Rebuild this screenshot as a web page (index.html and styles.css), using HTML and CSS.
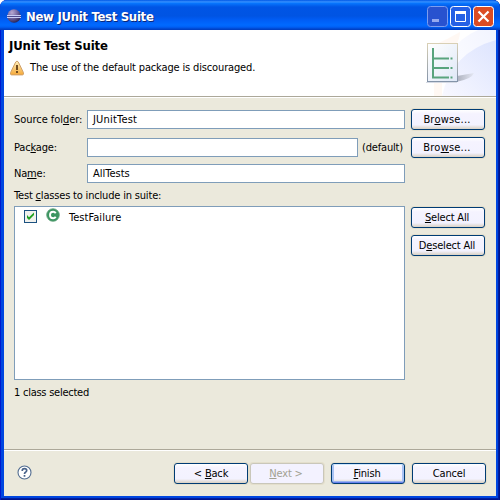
FILE: index.html
```html
<!DOCTYPE html>
<html lang="en">
<head>
<meta charset="utf-8">
<title>New JUnit Test Suite</title>
<link rel="stylesheet" href="styles.css">
</head>
<body>
<div class="window">
  <div class="titlebar">
    <svg class="app-icon" width="16" height="16" viewBox="0 0 16 16">
      <defs><radialGradient id="orb" cx=".35" cy=".25" r=".8"><stop offset="0" stop-color="#b9a9d2"/><stop offset=".5" stop-color="#7568a3"/><stop offset="1" stop-color="#252052"/></radialGradient></defs>
      <circle cx="8" cy="8" r="6.7" fill="url(#orb)"/>
      <path d="M1 7.500h14M1 9.500h14" stroke="#c9cdf5"/>
      <path d="M2 8.500h12" stroke="#51498e"/>
    </svg>
    <span class="title">New JUnit Test Suite</span>
    <div class="controls">
      <svg width="21" height="21" viewBox="0 0 21 21"><rect class="ctl dim" x=".5" y=".5" width="20" height="20" rx="3"/><path d="M5 13h7v3H5z" fill="#95a9ef"/></svg>
      <svg width="21" height="21" viewBox="0 0 21 21"><rect class="ctl" x=".5" y=".5" width="20" height="20" rx="3"/><path d="M5.5 5.5h10v10h-10z" fill="none" stroke="#fff"/><path d="M5 6.5h11" stroke="#fff" stroke-width="3"/></svg>
      <svg width="21" height="21" viewBox="0 0 21 21"><rect class="ctl close" x=".5" y=".5" width="20" height="20" rx="3"/><path d="M5.5 5.5l10 10M15.5 5.5l-10 10" stroke="#fff" stroke-width="2.2"/></svg>
    </div>
  </div>
  <div class="client">
    <div class="banner">
      <div class="message">
        <h1>JUnit Test Suite</h1>
        <div class="warning">
          <svg width="16" height="16" viewBox="0 0 16 16">
            <defs><linearGradient id="amber" x2="0" y2="1"><stop offset="0" stop-color="#fff0bd"/><stop offset="1" stop-color="#f5a938"/></linearGradient></defs>
            <path d="M8 1.2Q9 1.2 9.8 3L14.4 12.5Q15 14.9 13.5 14.9H2.5Q1 14.9 1.6 12.5L6.2 3Q7 1.2 8 1.2Z" fill="url(#amber)" stroke="#cf9f67"/>
            <path d="M8 5v5M8 11v2" stroke="#704b20" stroke-width="2"/>
          </svg>
          <span class="warn-text">The use of the default package is discouraged.</span>
        </div>
      </div>
      <svg class="art" width="96" height="66" viewBox="0 0 96 66">
        <defs>
          <linearGradient id="sky" x1="1" y1=".1" x2="0" y2=".7"><stop offset="0" stop-color="#f2f4ff"/><stop offset="1" stop-color="#fff"/></linearGradient>
          <linearGradient id="sky2" x1="1" y1="0" x2="0" y2="1"><stop offset="0" stop-color="#dde4fe"/><stop offset="1" stop-color="#f8f8ff"/></linearGradient>
          <linearGradient id="paper" x2="1" y2="1"><stop offset="0" stop-color="#fff"/><stop offset="1" stop-color="#dfe8f7"/></linearGradient>
          <linearGradient id="shade"><stop offset="0" stop-color="#aaaebb"/><stop offset="1" stop-color="#e5e8f4"/></linearGradient>
          <linearGradient id="edge" x2="0" y2="1"><stop offset="0" stop-color="#d9d0b5"/><stop offset="1" stop-color="#8494a9"/></linearGradient>
        </defs>
        <path d="M96 0V66H35Q42 15 78 0Z" fill="url(#sky)"/>
        <path d="M96 10V66H42Q52 22 96 10Z" fill="url(#sky2)"/>
        <path d="M34 15Q48 9 60 2Q60 14 42 36V66H34Z" fill="#fff4eb" opacity=".6"/>
        <path d="M57 46L74 43Q72 49 56 52Z" fill="url(#shade)"/>
        <path d="M26 52.500h31" stroke="#d5d9e3"/>
        <rect x="27.500" y="13.500" width="30" height="38" fill="url(#paper)" stroke="url(#edge)"/>
        <path d="M33 18V48M33 28.500H49M33 38H49M32 47.500H49" fill="none" stroke="#59a47d" stroke-width="2"/>
        <path d="M50.500 28.500h2M50.500 38h2M50.500 47.500h2" stroke="#59a47d" stroke-width="2"/>
      </svg>
    </div>
    <div class="form">
      <div class="row source"><label class="l1">Source fol<u>d</u>er:</label><div class="field"><span class="t-junit">JUnitTest</span></div><div class="button"><span class="b1">Br<u>o</u>wse...</span></div></div>
      <div class="row package"><label class="l2">Pac<u>k</u>age:</label><div class="field"></div><span class="default">(default)</span><div class="button"><span class="b1">Bro<u>w</u>se...</span></div></div>
      <div class="row name"><label class="l3">Na<u>m</u>e:</label><div class="field"><span class="t-all">AllTests</span></div></div>
      <div class="list-label"><span>Test <u>c</u>lasses to include in suite:</span></div>
      <div class="list-row">
        <div class="list">
          <div class="item">
            <svg width="13" height="13" viewBox="0 0 13 13"><rect x=".5" y=".5" width="12" height="12" fill="#f1f1ed" stroke="#1c5180"/><path d="M3 5v3l2 2 5-5V2.500L5 7.200Z" fill="#21a121"/></svg>
            <svg class="class-icon" width="14" height="14" viewBox="0 0 14 14"><circle cx="7" cy="7" r="6.300" fill="#3c9561" stroke="#5d9f78" stroke-width=".8"/><path d="M9.700 5.200Q8.900 3.700 7.200 3.700Q4 3.700 4 7Q4 10.300 7.200 10.300Q8.900 10.300 9.700 8.800" fill="none" stroke="#fff" stroke-width="1.900"/></svg>
            <span class="item-text">TestFailure</span>
          </div>
        </div>
        <div class="side"><div class="button"><span class="b2"><u>S</u>elect All</span></div><div class="button"><span class="b3">D<u>e</u>select All</span></div></div>
      </div>
      <div class="status"><span>1 class selected</span></div>
    </div>
    <div class="footer">
      <svg class="help" width="15" height="15" viewBox="0 0 15 15"><circle cx="7.500" cy="7.500" r="6.500" fill="#fff" stroke="#526d91" stroke-width="1.100"/><path d="M5.300 6V5Q5.500 3.700 7.500 3.700Q9.700 3.700 9.700 5.500Q9.700 6.500 8.500 7.200Q7.500 7.700 7.500 9M7.500 10v1.800" fill="none" stroke="#49638a" stroke-width="1.700"/></svg>
      <div class="button"><span class="b4">&lt; <u>B</u>ack</span></div>
      <div class="button disabled"><span class="b5"><u>N</u>ext &gt;</span></div>
      <div class="button primary"><span class="b6"><u>F</u>inish</span></div>
      <div class="button cancel"><span class="b7">Cancel</span></div>
    </div>
  </div>
</div>
</body>
</html>
```
FILE: styles.css
```css
* { box-sizing: border-box; }
body { margin: 0; background: #fff; font: 11px/14px "DejaVu Sans Condensed", "DejaVu Sans", sans-serif; font-stretch: condensed; color: #000; letter-spacing: -0.18px; }
svg { display: block; flex: none; }
span, label, h1 { white-space: nowrap; }
u { text-decoration: underline; text-decoration-thickness: 1px; text-underline-offset: 1px; text-decoration-skip-ink: none; }
.window { width: 500px; height: 500px; border-radius: 7px 7px 0 0; overflow: hidden; padding: 0 4px 4px; background: #0046e0; box-shadow: inset 1px 0 #0019cf, inset -1px 0 #00138c, inset -2px 0 #001ea0, inset 0 -1px #00138c, inset 0 -2px #001ea0; }
.titlebar { height: 30px; margin: 0 -4px; padding: 0 6px 0 6px; display: flex; align-items: center; background: linear-gradient(#0058e6 0, #3a93ff 2px, #0878ff 3px, #0055e5 7px, #0054e3 16px, #005df5 20px, #006aff 25px, #0060f5 27px, #0045cc 29px, #003bbd 30px); }
.app-icon { margin-top: 1px; }
.title { margin: 3px 0 0 4px; font-size: 13px; line-height: 17px; font-weight: bold; color: #fff; text-shadow: 1px 1px #0a2779; letter-spacing: -0.3px; }
.controls { display: flex; gap: 2px; margin: 3px 0 0 auto; }
.ctl { fill: #2560e5; stroke: #fff; }
.ctl.dim { fill: #2852cf; stroke: #7d9def; }
.ctl.close { fill: #db4c24; }
.client { height: 466px; display: flex; flex-direction: column; background: #ebe9dc; }
.banner { height: 68px; display: flex; justify-content: space-between; background: #fff; border-bottom: 1px solid #fff; box-shadow: inset 0 -1px #aca899; }
.message { padding: 8px 0 0 5px; }
h1 { margin: 0; font-size: 13px; line-height: 16px; font-weight: bold; letter-spacing: -0.13px; }
.warning { display: flex; margin-top: 6px; }
.warn-text { margin: 1px 0 0 5px; letter-spacing: -0.15px; }
.form { height: 351px; padding: 11px 11px 0 10px; }
.row { display: flex; align-items: center; height: 21px; }
.row label { width: 73px; padding-top: 1px; }
.row .l1 { letter-spacing: -0.05px; }
.package { margin-top: 7px; }
.name { margin-top: 5px; }
.field { width: 318px; height: 19px; padding: 2px 5px; border: 1px solid #7f9db9; background: #fff; }
.t-junit { letter-spacing: 0.2px; }
.t-all { letter-spacing: 0; }
.package .field { width: 271px; }
.default { width: 47px; padding: 1px 0 0 4px; }
.button { width: 74px; height: 21px; border: 1px solid #003c74; border-radius: 3px; background: linear-gradient(#fff, #f5f3ff 20%, #f3f2ff 78%, #d9d1c3); display: flex; align-items: center; justify-content: center; box-shadow: 0 0 0 1px #e4dfcc; }
.row .button { margin-left: 6px; }
.b1 { letter-spacing: 0.2px; margin: 1px 2px 0 0; }
.b2, .b3, .b5, .b6 { margin: 1px 2px 0 0; }
.b4, .b7 { margin-top: 1px; }
.list-label { height: 22px; padding-top: 5px; }
.list-row { display: flex; gap: 6px; }
.list { width: 391px; height: 174px; background: #fff; border: 1px solid #7f9db9; }
.item { display: flex; align-items: center; height: 19px; padding-left: 9px; }
.class-icon { margin: -4px 0 0 9px; }
.item-text { margin: 2px 0 0 9px; letter-spacing: 0.05px; }
.side { padding-top: 1px; display: grid; gap: 7px; align-content: start; }
.status { padding-top: 6px; letter-spacing: -0.25px; }
.footer { height: 47px; border-top: 1px solid #aca899; box-shadow: inset 0 1px #fff; padding: 13px 10px 0 13px; display: flex; }
.help { margin: 2px 142px 0 0; }
.disabled { margin-left: 2px; color: #a1a192; border-color: #c9c7ba; background: #f3f2ff; }
.primary { margin-left: 7px; box-shadow: inset 0 1px #cee7ff, inset 0 -1px #6982ee, inset 2px 0 #a9c3f4, inset -2px 0 #a9c3f4, inset 0 -2px #9ab4ed, 0 0 0 1px #e4dfcc; }
.cancel { margin-left: 7px; }
```
